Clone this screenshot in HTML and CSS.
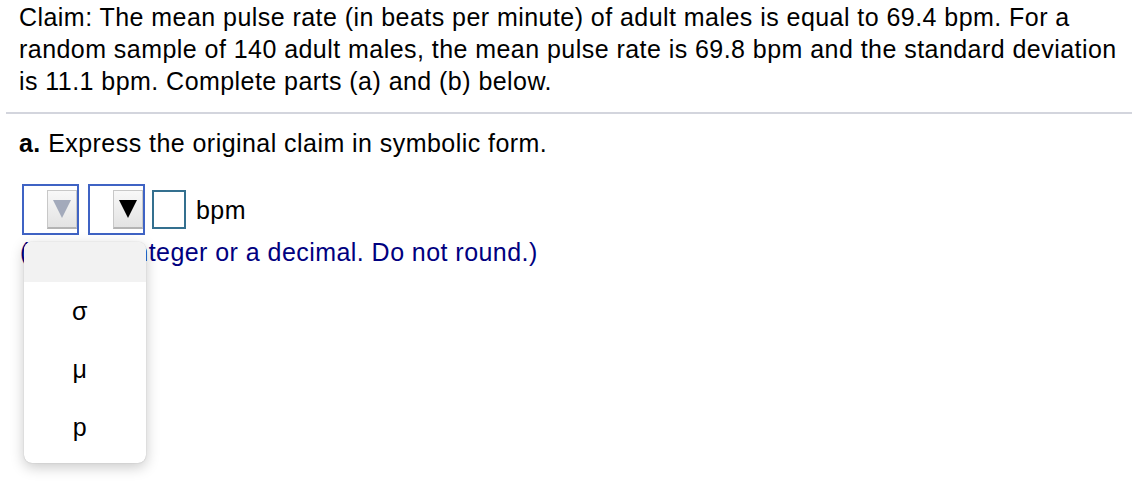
FILE: index.html
```html
<!DOCTYPE html>
<html>
<head>
<meta charset="utf-8">
<link rel="stylesheet" href="styles.css">
</head>
<body>
<div class="page">
  <div class="question">Claim: The mean pulse rate (in beats per minute) of adult males is equal to 69.4 bpm. For a random sample of 140 adult males, the mean pulse rate is 69.8 bpm and the standard deviation is 11.1 bpm. Complete parts (a) and (b) below.</div>
  <hr class="sep">
  <div class="part"><b>a.</b> Express the original claim in symbolic form.</div>
  <div class="answer-row">
    <div class="select">
      <span class="btn"><span class="tri tri-gray"></span></span>
    </div>
    <div class="select">
      <span class="btn"><span class="tri"></span></span>
    </div>
    <span class="input"></span>
    <span class="unit">bpm</span>
  </div>
  <div class="hint-wrap">
    <div class="hint">(Type an integer or a decimal. Do not round.)</div>
    <div class="menu">
      <div class="item item-blank"></div>
      <div class="item">σ</div>
      <div class="item">μ</div>
      <div class="item">p</div>
    </div>
  </div>
</div>
</body>
</html>
```

FILE: styles.css
```css
html, body {
  margin: 0;
  padding: 0;
  background: #fff;
}
body {
  font-family: "Liberation Sans", Arial, sans-serif;
  font-size: 25px;
  letter-spacing: 0.45px;
  color: #000;
}
.page {
  width: 1132px;
  height: 484px;
  overflow: hidden;
  padding-top: 1px;
}
.question {
  padding: 0 4px 0 19px;
  line-height: 32px;
}
.sep {
  margin: 15px 0 0 6px;
  border: 0;
  height: 2px;
  background: #d3d5dd;
}
.part {
  padding-left: 19px;
  margin-top: 13px;
  line-height: 32px;
}
.answer-row {
  display: flex;
  align-items: center;
  margin-top: 25px;
  padding-left: 22px;
  height: 51px;
}
.select {
  width: 53px;
  height: 47px;
  border: 2px solid #3f63c4;
  display: flex;
  align-items: center;
  justify-content: flex-end;
  margin-right: 9px;
}
.btn {
  width: 30px;
  height: 39px;
  box-sizing: border-box;
  border: 1px solid #c8c8c8;
  border-bottom: 2px solid #b4b4b4;
  background: linear-gradient(#f8f8f8, #e3e3e3);
  display: flex;
  align-items: center;
  justify-content: center;
}
.tri {
  width: 0;
  height: 0;
  border-left: 9.5px solid transparent;
  border-right: 9.5px solid transparent;
  border-top: 18px solid #000;
}
.tri-gray {
  border-top-color: #a3aabb;
}
.input {
  width: 30px;
  height: 35px;
  border: 2px solid #34708f;
  margin-left: -2px;
}
.unit {
  margin-left: 10px;
  line-height: 24px;
}
.hint-wrap {
  position: relative;
}
.hint {
  color: #000080;
  padding-left: 20px;
  margin-top: 1px;
  line-height: 32px;
}
.menu {
  position: absolute;
  left: 24px;
  top: 6px;
  width: 122px;
  background: #fff;
  border-radius: 8px;
  box-shadow: 0 4px 14px rgba(0,0,0,0.22), 0 0 1px rgba(0,0,0,0.3);
  overflow: hidden;
  padding-bottom: 7px;
}
.item {
  height: 58px;
  display: flex;
  align-items: center;
  justify-content: center;
  padding-right: 10px;
  color: #000;
}
.item-blank {
  height: 40px;
  background: #f2f2f2;
}
```
